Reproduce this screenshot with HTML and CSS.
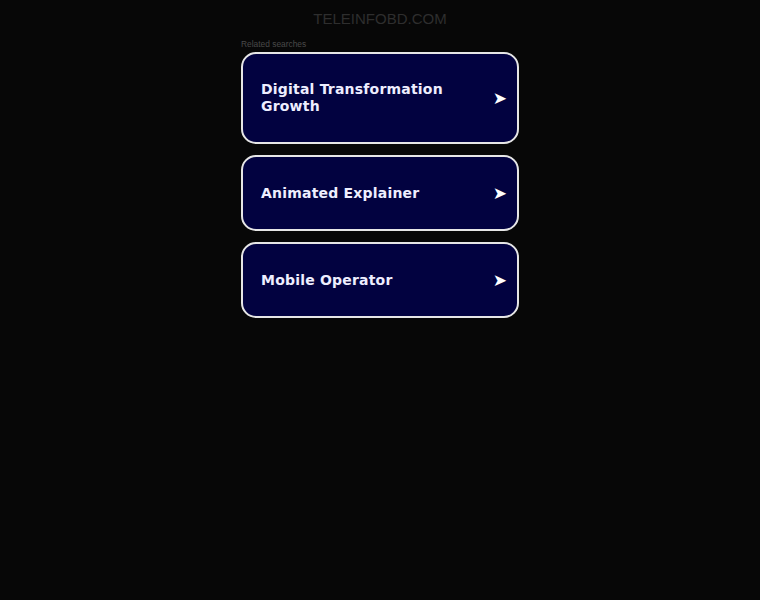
FILE: index.html
```html
<!DOCTYPE html>
<html lang="en">
  <head>
    <meta charset="UTF-8" />
    <meta name="viewport" content="width=device-width, initial-scale=1.0" />
    <title>teleinfobd.com</title>
    <link rel="stylesheet" href="styles.css">
  </head>
  <body>
    <div class="header">
      <h1 class="domain">TELEINFOBD.COM</h1>
    </div>

    <div class="main-content">
      <div class="related-title">Related searches</div>

      <a href="#" class="search-link">
        <span class="search-text">Digital Transformation Growth</span>
        <span class="search-arrow">➤</span>
      </a>
      <a href="#" class="search-link">
        <span class="search-text">Animated Explainer</span>
        <span class="search-arrow">➤</span>
      </a>
      <a href="#" class="search-link">
        <span class="search-text">Mobile Operator</span>
        <span class="search-arrow">➤</span>
      </a>
    </div>
  </body>
</html>
```

FILE: styles.css
```css
* {
  margin: 0;
  padding: 0;
  box-sizing: border-box;
}

body {
  background-color: #070707;
  min-height: 100vh;
  font-family: "Liberation Sans", Arial, sans-serif;
}

.header {
  text-align: center;
  padding-top: 9px;
}

.domain {
  font-size: 15px;
  font-weight: normal;
  line-height: 20px;
  color: #2e2e2e;
}

.main-content {
  width: 278px;
  margin: 0 auto;
  padding-top: 9px;
}

.related-title {
  font-size: 8.4px;
  line-height: 12px;
  color: #4a4a4a;
  margin-bottom: 2px;
}

.search-link {
  display: flex;
  align-items: center;
  justify-content: space-between;
  gap: 12px;
  min-height: 76px;
  padding: 27px 10px 27px 18px;
  margin-bottom: 11px;
  background-color: #020240;
  border: 2px solid #e6e6e6;
  border-radius: 15px;
  text-decoration: none;
  color: #eeeeff;
  font-family: "DejaVu Sans", sans-serif;
  font-weight: bold;
}

.search-text {
  font-size: 14px;
  line-height: 17px;
  letter-spacing: 0.2px;
}

.search-arrow {
  font-size: 17px;
  line-height: 17px;
  color: #fff;
}
```
